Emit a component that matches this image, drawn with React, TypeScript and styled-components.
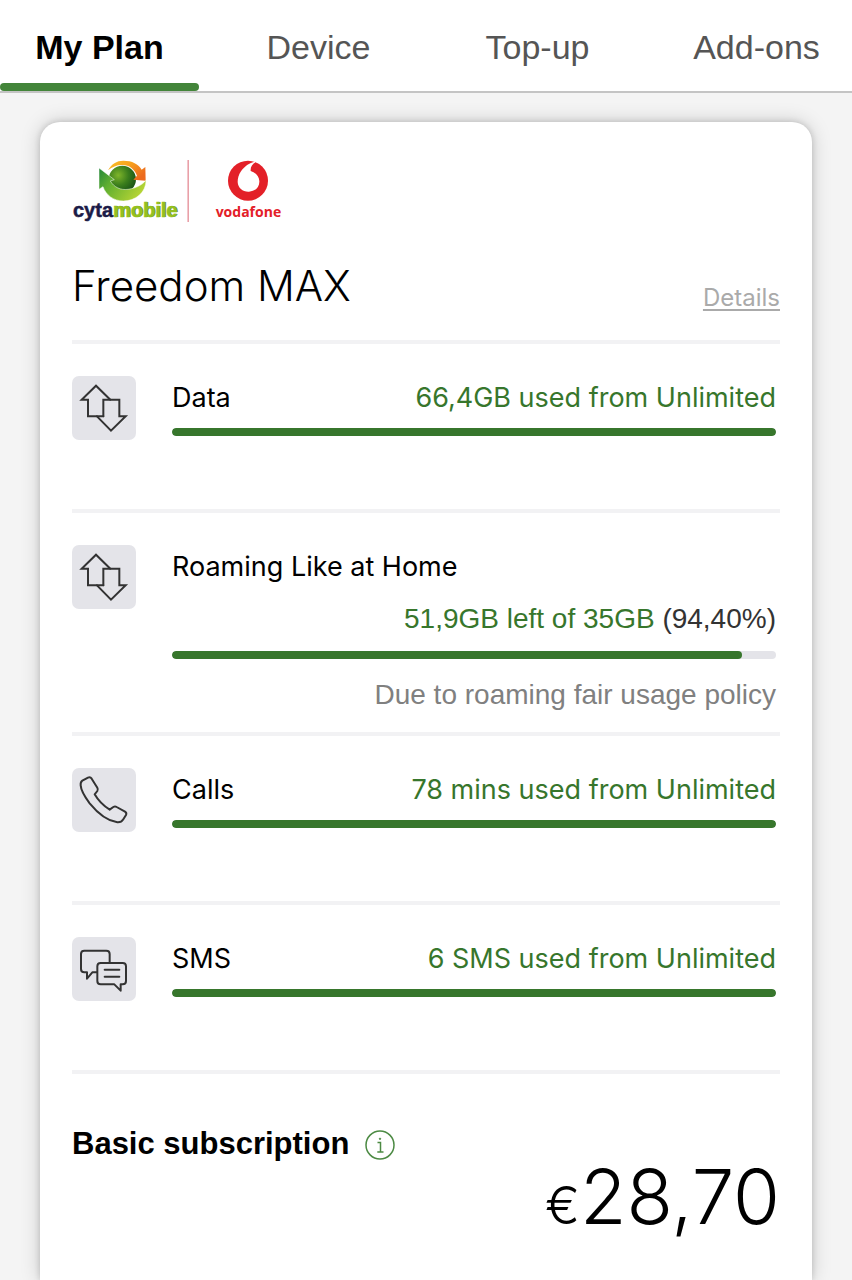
import React, { useState } from "react";
import styled, { createGlobalStyle } from "styled-components";

const GlobalStyle = createGlobalStyle`
  *, *::before, *::after { box-sizing: border-box; }
  body {
    margin: 0;
    background: #f4f4f4;
    color: #000;
    font-family: Inter, "Liberation Sans", sans-serif;
  }
  button { border: 0; padding: 0; background: none; cursor: pointer; }
`;

const helvetica = `"Liberation Sans", Arial, sans-serif`;
const light = `Inter, "Liberation Sans", sans-serif`;
const green = "#37762c";

const Page = styled.div`
  min-height: 100vh;
  display: flex;
  flex-direction: column;
  overflow-x: hidden;
`;

const TabBar = styled.nav`
  background: #fff;
  border-bottom: 2px solid #c4c4c4;
`;

const TabList = styled.div`
  display: grid;
  grid-template-columns: repeat(4, 1fr);
  gap: 20px;
  margin-right: -4px;
`;

const Tab = styled.button<{ $active: boolean }>`
  display: flex;
  flex-direction: column;
  height: 91px;
  padding-top: 27px;
  font: ${(p) => (p.$active ? 700 : 400)} 34px/40px ${helvetica};
  color: ${(p) => (p.$active ? "#000" : "#555")};
  text-align: center;
  white-space: nowrap;
  &::after {
    content: "";
    height: 8px;
    margin-top: auto;
    border-radius: 4px;
    background: ${(p) => (p.$active ? "#43853a" : "transparent")};
  }
`;

const TabLabel = styled.span`
  align-self: center;
`;

const Main = styled.main`
  flex: 1;
  display: flex;
  padding: 29px 40px 0;
`;

const Card = styled.section`
  flex: 1;
  min-width: 0;
  padding: 36px 32px 40px;
  border-radius: 20px 20px 0 0;
  background: #fff;
  box-shadow: 0 0 6px rgba(0, 0, 0, 0.16), 0 0 20px rgba(0, 0, 0, 0.18);
`;

const Logos = styled.svg`
  display: block;
  width: 210px;
  height: 66px;
`;

const PlanHeader = styled.header`
  display: flex;
  justify-content: space-between;
  align-items: flex-end;
  padding: 32px 0 24px;
`;

const PlanName = styled.h1`
  margin: 0;
  font: 300 42px/60px ${light};
`;

const DetailsLink = styled.a`
  color: #aaa;
  font-size: 24px;
  line-height: 36px;
  text-decoration: underline;
  text-underline-offset: 3px;
  text-decoration-thickness: 2px;
`;

const UsageList = styled.ul`
  margin: 0;
  padding: 0;
  list-style: none;
  border-bottom: 4px solid #f2f2f4;
`;

const UsageRow = styled.li`
  display: grid;
  grid-template-columns: 64px minmax(0, 1fr);
  column-gap: 36px;
  align-items: start;
  min-height: 169px;
  padding: 32px 4px 21px 0;
  border-top: 4px solid #f2f2f4;
`;

const IconTile = styled.svg`
  width: 64px;
  height: 64px;
  border-radius: 7px;
  background: #e4e4e9;
  fill: none;
  stroke: #333;
  stroke-width: 6;
  stroke-linejoin: round;
  stroke-linecap: round;
`;

const UsageHead = styled.div<{ $stacked?: boolean }>`
  display: flex;
  flex-direction: ${(p) => (p.$stacked ? "column" : "row")};
  justify-content: space-between;
  gap: ${(p) => (p.$stacked ? "20px" : "0")};
  padding: ${(p) => (p.$stacked ? "6px 0 16px" : "6px 0 14px")};
  line-height: 32px;
`;

const UsageTitle = styled.span`
  font-size: 27px;
`;

const UsageValue = styled.span<{ $classic?: boolean }>`
  align-self: flex-end;
  color: ${green};
  font-size: ${(p) => (p.$classic ? "28px" : "27px")};
  font-family: ${(p) => (p.$classic ? helvetica : "inherit")};
`;

const Percent = styled.span`
  color: #333;
`;

const Track = styled.div`
  height: 8px;
  border-radius: 4px;
  background: #e4e4e9;
  overflow: hidden;
`;

const Fill = styled.div`
  height: 100%;
  border-radius: 4px;
  background: ${green};
`;

const Note = styled.p`
  margin: 20px 0 0;
  color: #808080;
  font: 28px/32px ${helvetica};
  text-align: right;
`;

const Subscription = styled.div`
  padding-top: 50px;
`;

const SubscriptionHead = styled.div`
  display: flex;
  align-items: center;
  gap: 16px;
`;

const SubscriptionTitle = styled.h2`
  margin: 0;
  font: 700 31px/40px ${helvetica};
`;

const InfoButton = styled.button`
  display: flex;
  padding-top: 2px;
`;

const Price = styled.p`
  margin: 0;
  font: 300 76px/64px ${light};
  text-align: right;
`;

const Currency = styled.span`
  font-size: 52px;
`;

const BrandLogos = () => (
  <Logos viewBox="66 39 630 198" role="img" aria-label="cytamobile vodafone">
    <defs>
      <radialGradient id="sphere" cx="0.35" cy="0.35" r="0.75">
        <stop offset="0" stopColor="#7fb52a" />
        <stop offset="0.5" stopColor="#3a7d1c" />
        <stop offset="1" stopColor="#154d16" />
      </radialGradient>
      <linearGradient id="leaf" x1="0" y1="0" x2="1" y2="0.5">
        <stop offset="0" stopColor="#23873a" />
        <stop offset="0.35" stopColor="#5fae30" />
        <stop offset="1" stopColor="#b3d334" />
      </linearGradient>
      <linearGradient id="flame" x1="0" y1="0" x2="1" y2="0.6">
        <stop offset="0" stopColor="#f9c22b" />
        <stop offset="0.5" stopColor="#f7a11d" />
        <stop offset="1" stopColor="#ec6a1e" />
      </linearGradient>
    </defs>
    <circle cx="217" cy="103" r="41" fill="url(#sphere)" />
    <path d="M174 76C184 57 200 47 220 47C246 47 266 57 275 74L286 66L287 107L250 104L261 92C252 70 238 61 218 60C202 59 188 65 174 76Z" fill="url(#flame)" />
    <path d="M147 69L193 104L181 108C192 127 212 136 234 133C260 129 276 120 288 106C288 143 256 168 220 168C190 168 167 149 159 125L147 133Z" fill="url(#leaf)" stroke="#fff" strokeWidth="1.5" />
    <text x="69" y="215" fill="#1b1b47" stroke="#1b1b47" strokeWidth="1.5" fontFamily="Liberation Sans" fontWeight="700" fontSize="60">cyta</text>
    <text x="192" y="217" fill="#5c7d25" fontFamily="Liberation Sans" fontWeight="700" fontSize="60">mobile</text>
    <text x="189" y="215" fill="#94c11f" stroke="#94c11f" strokeWidth="1.5" fontFamily="Liberation Sans" fontWeight="700" fontSize="60">mobile</text>
    <path d="M414.500 45V231" stroke="#e58d97" strokeWidth="4" />
    <circle cx="594" cy="107" r="60" fill="#e32028" />
    <path d="M615 50C598 53 583 64 573 79C566 89 563 100 563 111C564 130 579 141 597 140C616 139 629 126 628 108C627 92 616 82 602 78C601 66 606 57 618 51Z" fill="#fff" />
    <text x="497" y="215" fill="#e32028" fontFamily="Open Sans" fontWeight="700" fontSize="42">vodafone</text>
  </Logos>
);

const DataIcon = () => (
  <IconTile viewBox="36 32 192 192" aria-hidden="true">
    <path d="M130 153H84V103H65L108 61L151 103" strokeLinejoin="miter" />
    <path d="M130 153V103H178V153H197L153 196L111 153" strokeLinejoin="miter" />
  </IconTile>
);

const PhoneIcon = () => (
  <IconTile viewBox="36 24 192 192" aria-hidden="true">
    <path d="M67 62L84 53Q91 50 95 56L112 83Q115 88 112 93L104 103Q120 131 149 149L160 141Q165 138 170 141L195 155Q201 159 198 165L190 178Q184 188 172 187C138 182 107 152 89 130C75 111 63 93 62 76Q61 66 67 62Z" />
  </IconTile>
);

const SmsIcon = () => (
  <IconTile viewBox="36 38 192 192" aria-hidden="true">
    <path d="M110 144H97L81 163V144H73Q63 144 63 134V89Q63 79 73 79H139Q149 79 149 89V115" />
    <path d="M122 116H188Q198 116 198 126V170Q198 180 188 180H182V199L163 180H122Q112 180 112 170V126Q112 116 122 116Z" />
    <path d="M134 136H178M134 157H178" />
  </IconTile>
);

const InfoIcon = () => (
  <svg width="30" height="30" viewBox="0 0 30 30" fill="none" stroke="#4c8a43" strokeWidth="1.500" aria-hidden="true">
    <circle cx="15" cy="15" r="14" />
    <path d="M12.500 12.500H15.500V22M12.300 22H18.500" />
    <circle cx="15" cy="8.800" r="0.700" fill="#4c8a43" strokeWidth="1" />
  </svg>
);

type Usage = {
  title: string;
  value: string;
  percent?: string;
  used: number;
  note?: string;
  icon: React.ReactNode;
};

const usages: Usage[] = [
  { title: "Data", value: "66,4GB used from Unlimited", used: 100, icon: <DataIcon /> },
  {
    title: "Roaming Like at Home",
    value: "51,9GB left of 35GB",
    percent: "(94,40%)",
    used: 94.4,
    note: "Due to roaming fair usage policy",
    icon: <DataIcon />,
  },
  { title: "Calls", value: "78 mins used from Unlimited", used: 100, icon: <PhoneIcon /> },
  { title: "SMS", value: "6 SMS used from Unlimited", used: 100, icon: <SmsIcon /> },
];

const tabs = ["My Plan", "Device", "Top-up", "Add-ons"];

export default function App() {
  const [active, setActive] = useState(tabs[0]);
  return (
    <Page>
      <GlobalStyle />
      <TabBar>
        <TabList role="tablist">
          {tabs.map((tab) => (
            <Tab
              key={tab}
              type="button"
              role="tab"
              aria-selected={tab === active}
              $active={tab === active}
              onClick={() => setActive(tab)}
            >
              <TabLabel>{tab}</TabLabel>
            </Tab>
          ))}
        </TabList>
      </TabBar>
      <Main>
        <Card>
          <BrandLogos />
          <PlanHeader>
            <PlanName>Freedom MAX</PlanName>
            <DetailsLink href="#details">Details</DetailsLink>
          </PlanHeader>
          <UsageList>
            {usages.map((u) => (
              <UsageRow key={u.title}>
                {u.icon}
                <div>
                  <UsageHead $stacked={!!u.percent}>
                    <UsageTitle>{u.title}</UsageTitle>
                    <UsageValue $classic={!!u.percent}>
                      {u.value}
                      {u.percent && <Percent> {u.percent}</Percent>}
                    </UsageValue>
                  </UsageHead>
                  <Track role="progressbar" aria-label={u.title} aria-valuenow={u.used}>
                    <Fill style={{ width: `${u.used}%` }} />
                  </Track>
                  {u.note && <Note>{u.note}</Note>}
                </div>
              </UsageRow>
            ))}
          </UsageList>
          <Subscription>
            <SubscriptionHead>
              <SubscriptionTitle>Basic subscription</SubscriptionTitle>
              <InfoButton type="button" aria-label="About the basic subscription">
                <InfoIcon />
              </InfoButton>
            </SubscriptionHead>
            <Price>
              <Currency>€</Currency>28,70
            </Price>
          </Subscription>
        </Card>
      </Main>
    </Page>
  );
}
